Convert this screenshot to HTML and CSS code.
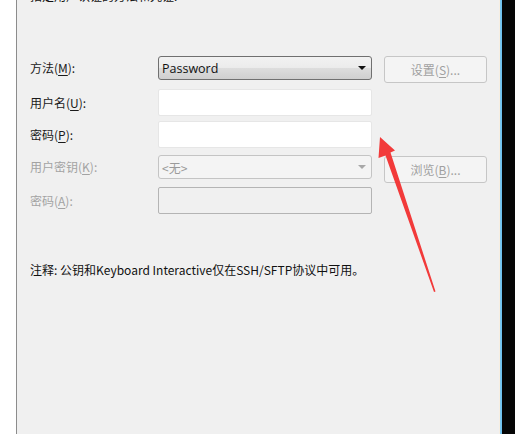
FILE: index.html
```html
<!DOCTYPE html>
<html lang="zh">
<head>
<meta charset="utf-8">
<link rel="stylesheet" href="styles.css">
</head>
<body>
<div class="screen">
  <div class="gutter"></div>
  <div class="panel">
    <div class="heading">指定用户认证的方法和凭证:</div>
    <div class="form">
      <div class="row r1">
        <label class="lbl">方法(<u>M</u>):</label>
        <div class="combo"><span>Password</span><span class="tri"></span></div>
        <button class="btn">设置(<u>S</u>)...</button>
      </div>
      <div class="row r2">
        <label class="lbl">用户名(<u>U</u>):</label>
        <div class="input"></div>
      </div>
      <div class="row r3">
        <label class="lbl">密码(<u>P</u>):</label>
        <div class="input"></div>
      </div>
      <div class="row r4">
        <label class="lbl dis">用户密钥(<u>K</u>):</label>
        <div class="combo dis"><span>&lt;无&gt;</span><span class="tri"></span></div>
        <button class="btn b2">浏览(<u>B</u>)...</button>
      </div>
      <div class="row r5">
        <label class="lbl dis">密码(<u>A</u>):</label>
        <div class="input dis"></div>
      </div>
    </div>
    <p class="note">注释: 公钥和Keyboard Interactive仅在SSH/SFTP协议中可用。</p>
    <svg class="arrow" width="515" height="434" viewBox="0 0 515 434">
      <polygon points="380,137 395,150.5 390.5,152.5 435.5,291.5 434,292 385.5,155.5 378.5,158" fill="#f23a3a"/>
    </svg>
  </div>
  <div class="edge"></div>
  <div class="black"></div>
</div>
</body>
</html>
```
FILE: styles.css
```css
* { box-sizing: border-box; }
html, body { margin: 0; padding: 0; }
body {
  background: #fff;
  font-family: "Noto Sans CJK SC", "Noto Sans", sans-serif;
  font-size: 12px;
  color: #1a1a1a;
  overflow: hidden;
}
.screen {
  display: flex;
  width: 515px;
  height: 434px;
}
.gutter { width: 16px; background: #fff; flex: none; }
.panel {
  width: 483px;
  flex: none;
  background: #f0f0f0;
  border-left: 1px solid #8c8c8c;
  position: relative;
}
.edge {
  width: 3px;
  flex: none;
  background: linear-gradient(to right, #f6eee2 0, #f6eee2 1px, #7ecbf2 1px, #6bbfee 3px);
}
.black { flex: 1; background: #050505; }
.heading {
  margin: -12px 0 0 13px;
  height: 16px;
  line-height: 16px;
  color: #111;
}
.form {
  margin-top: 52px;
  display: flex;
  flex-direction: column;
}
.row {
  display: grid;
  grid-template-columns: 116px 214px 103px;
  column-gap: 12px;
  padding-left: 13px;
  align-items: start;
}
.r1 { height: 27px; }
.r2 { margin-top: 6px; }
.r3 { margin-top: 5px; }
.r4 { margin-top: 7px; height: 28px; }
.r5 { margin-top: 4px; }
.lbl {
  line-height: 16px;
  margin-top: 4px;
  white-space: nowrap;
}
.r2 .lbl, .r3 .lbl, .r5 .lbl { margin-top: 6px; }
.lbl.dis { color: #a3a3a3; }
u { text-underline-offset: 2px; }
.combo {
  height: 24px;
  border: 1px solid #707070;
  border-radius: 3px;
  background: linear-gradient(#f2f2f2 0, #ebebeb 50%, #dddddd 51%, #cfcfcf 100%);
  display: flex;
  align-items: center;
  justify-content: space-between;
  padding: 0 5px 0 3px;
  font-family: "Open Sans", "Noto Sans CJK SC", sans-serif;
  font-size: 12.5px;
  color: #111;
}
.combo .tri {
  width: 0; height: 0;
  border-left: 4px solid transparent;
  border-right: 4px solid transparent;
  border-top: 4px solid #111;
}
.combo.dis {
  background: #f4f4f4;
  border-color: #c4c4c4;
  color: #9a9a9a;
  font-family: "Noto Sans CJK SC", sans-serif;
  font-size: 12px;
}
.combo.dis .tri { border-top-color: #a8a8a8; }
.input {
  height: 27px;
  background: #fff;
  border: 1px solid #e6e6e6;
  border-radius: 2px;
}
.input.dis {
  background: #f0f0f0;
  border-color: #b4b4b4;
}
.btn {
  height: 27px;
  border: 1px solid #c6c6c6;
  border-radius: 3px;
  background: #f4f4f4;
  color: #a0a0a0;
  font-family: "Noto Sans CJK SC", sans-serif;
  font-size: 12px;
  padding: 0;
}
.b2 { margin-top: 1px; }
.note {
  margin: 48px 0 0 13px;
  line-height: 16px;
  color: #111;
}
.arrow {
  position: absolute;
  left: -17px;
  top: 0;
  pointer-events: none;
}
```
